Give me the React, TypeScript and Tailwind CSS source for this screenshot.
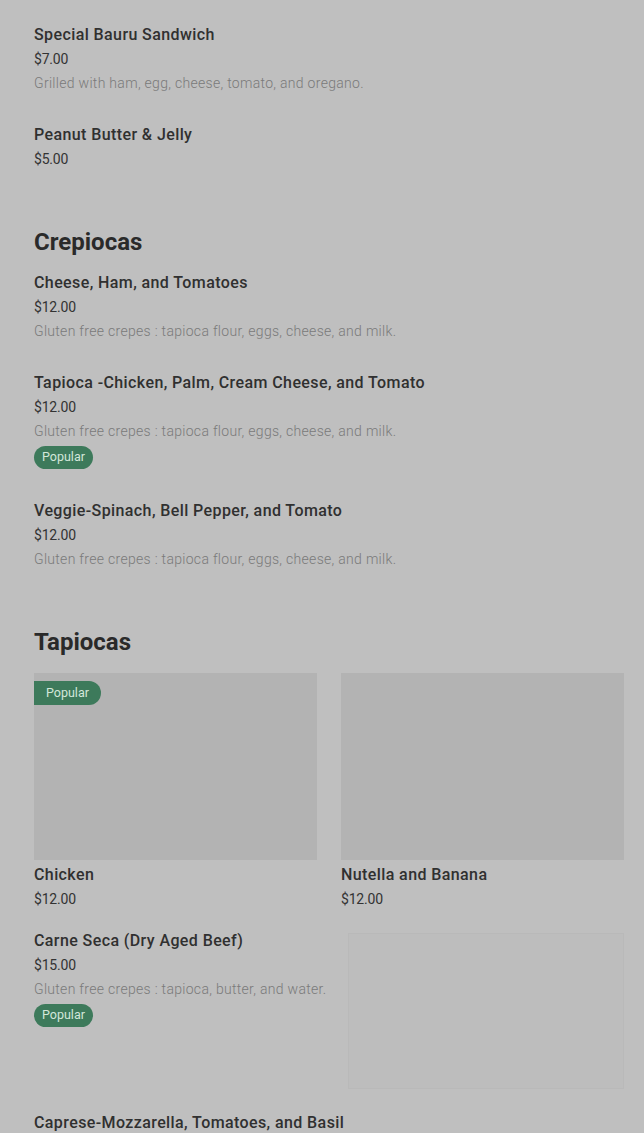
import type { ReactNode } from 'react';

type Item = {
  name: string;
  price: string;
  desc?: string;
  popular?: boolean;
};

const sandwiches: Item[] = [
  { name: 'Special Bauru Sandwich', price: '$7.00', desc: 'Grilled with ham, egg, cheese, tomato, and oregano.' },
  { name: 'Peanut Butter & Jelly', price: '$5.00' },
];

const crepiocas: Item[] = [
  { name: 'Cheese, Ham, and Tomatoes', price: '$12.00', desc: 'Gluten free crepes : tapioca flour, eggs, cheese, and milk.' },
  { name: 'Tapioca -Chicken, Palm, Cream Cheese, and Tomato', price: '$12.00', desc: 'Gluten free crepes : tapioca flour, eggs, cheese, and milk.', popular: true },
  { name: 'Veggie-Spinach, Bell Pepper, and Tomato', price: '$12.00', desc: 'Gluten free crepes : tapioca flour, eggs, cheese, and milk.' },
];

function Badge({ className = '' }: { className?: string }) {
  return (
    <span className={`inline-flex items-center h-[23px] px-2 rounded-full bg-[#3d7a5b] text-[#d3e7da] text-[12.5px] leading-none ${className}`}>
      Popular
    </span>
  );
}

function Title({ children, className = '' }: { children: ReactNode; className?: string }) {
  return <div className={`text-[16px] leading-6 font-medium tracking-[0.4px] text-[#303030] ${className}`}>{children}</div>;
}

function Price({ children }: { children: ReactNode }) {
  return <div className="text-[14px] leading-6 tracking-[-0.2px] text-[#333]">{children}</div>;
}

function Desc({ children }: { children: ReactNode }) {
  return <div className="text-[14px] leading-6 font-light tracking-[0.3px] text-[#7a7a7a]">{children}</div>;
}

function Row({ item }: { item: Item }) {
  return (
    <div className={item.popular ? 'pb-[30px]' : 'pb-[28px]'}>
      <Title>{item.name}</Title>
      <Price>{item.price}</Price>
      {item.desc && <Desc>{item.desc}</Desc>}
      {item.popular && <Badge className="mt-[3px]" />}
    </div>
  );
}

function Section({ title, children }: { title: string; children: ReactNode }) {
  return (
    <section className="pt-[27px]">
      <h2 className="text-[24px] leading-8 font-bold text-[#2a2a2a] mb-[13px]">{title}</h2>
      {children}
    </section>
  );
}

function Card({ name, price, popular }: { name: string; price: string; popular?: boolean }) {
  return (
    <div>
      <div className="relative h-[187px] bg-[#b3b3b3]">
        {popular && (
          <span className="absolute left-0 top-2 h-6 px-3 inline-flex items-center rounded-r-full bg-[#3d7a5b] text-[#d3e7da] text-[12.5px]">
            Popular
          </span>
        )}
      </div>
      <Title className="mt-[3px]">{name}</Title>
      <Price>{price}</Price>
    </div>
  );
}

export default function App() {
  return (
    <div className="min-h-screen bg-[#bfbfbf] pl-[34px] pr-5 pt-[23px] font-['Roboto',sans-serif] overflow-hidden">
      {sandwiches.map((it) => (
        <Row key={it.name} item={it} />
      ))}

      <Section title="Crepiocas">
        {crepiocas.map((it) => (
          <Row key={it.name} item={it} />
        ))}
      </Section>

      <Section title="Tapiocas">
        <div className="grid grid-cols-2 gap-6 pt-[2px]">
          <Card name="Chicken" price="$12.00" popular />
          <Card name="Nutella and Banana" price="$12.00" />
        </div>

        <div className="flex mt-[18px]">
          <div className="flex-1">
            <Title>Carne Seca (Dry Aged Beef)</Title>
            <Price>$15.00</Price>
            <Desc>Gluten free crepes : tapioca, butter, and water.</Desc>
            <Badge className="mt-[3px]" />
          </div>
          <div className="w-[276px] h-[156px] mt-1 bg-[#bdbdbd] border border-[#b9b9b9]" />
        </div>

        <Title className="mt-[22px]">Caprese-Mozzarella, Tomatoes, and Basil</Title>
      </Section>
    </div>
  );
}
